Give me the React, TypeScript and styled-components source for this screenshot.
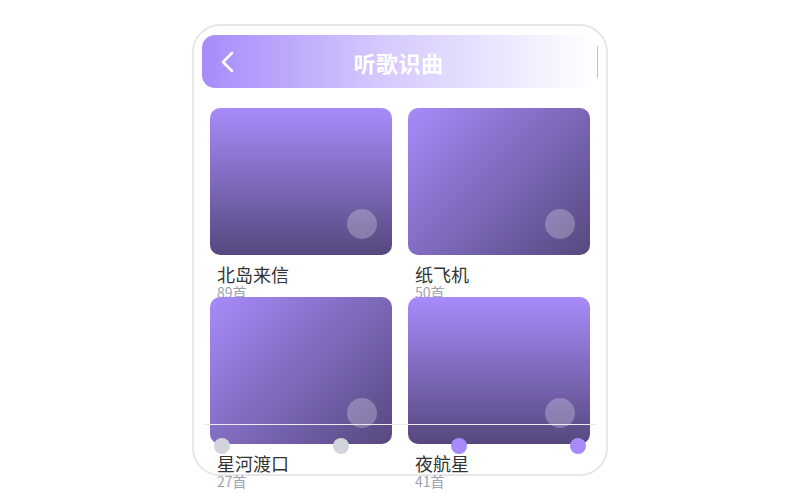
import styled, { createGlobalStyle } from "styled-components";

const GlobalStyle = createGlobalStyle`
  html, body {
    margin: 0;
    padding: 0;
    background: #ffffff;
    font-family: "Noto Sans CJK SC", "Noto Sans", sans-serif;
  }
`;

const Page = styled.div`
  display: flex;
  justify-content: center;
  padding: 24px 0 40px 0;
`;

const Phone = styled.div`
  position: relative;
  box-sizing: border-box;
  width: 416px;
  height: 452px;
  border: 2px solid #e5e7eb;
  border-radius: 28px;
  background: #ffffff;
`;

const Header = styled.header`
  display: flex;
  align-items: center;
  gap: 2px;
  padding: 9px 8px 0 8px;
`;

const Bar = styled.div`
  flex: 1;
  height: 53px;
  border-radius: 13px;
  background: linear-gradient(90deg, #a78bfa 0%, #d4c8fd 45%, #ffffff 100%);
  display: grid;
  grid-template-columns: 40px 1fr 40px;
  align-items: center;
`;

const Back = styled.button`
  background: none;
  border: none;
  padding: 0 0 0 18px;
  display: flex;
  align-items: center;
  cursor: pointer;
`;

const Title = styled.h1`
  margin: 0;
  text-align: center;
  color: #ffffff;
  font-size: 22px;
  font-weight: 700;
  letter-spacing: 0.5px;
`;

const Edge = styled.div`
  width: 1px;
  height: 32px;
  background: #c4b5fd;
`;

const Grid = styled.div`
  display: grid;
  grid-template-columns: repeat(2, 1fr);
  grid-auto-rows: 173px;
  column-gap: 16px;
  row-gap: 16px;
  padding: 20px 16px 0 16px;
`;

const Card = styled.div`
  display: flex;
  flex-direction: column;
`;

const Cover = styled.div<{ $angle: number }>`
  position: relative;
  flex-shrink: 0;
  height: 147px;
  border-radius: 10px;
  background: linear-gradient(${(p) => p.$angle}deg, #a78bfa 0%, #56487e 100%);
`;

const Play = styled.span`
  position: absolute;
  right: 15px;
  bottom: 16px;
  width: 30px;
  height: 30px;
  border-radius: 50%;
  background: rgba(255, 255, 255, 0.25);
`;

const Name = styled.div`
  flex-shrink: 0;
  margin-top: 9px;
  padding-left: 7px;
  font-size: 18px;
  line-height: 20px;
  color: #333333;
  white-space: nowrap;
`;

const Count = styled.div`
  flex-shrink: 0;
  padding-left: 7px;
  font-size: 14px;
  line-height: 16px;
  color: #9ca3af;
  white-space: nowrap;
`;

const Steps = styled.div`
  position: absolute;
  top: 398px;
  left: 9px;
  right: 9px;
`;

const Line = styled.div`
  height: 1px;
  background: #ececec;
`;

const Dots = styled.div`
  display: flex;
  justify-content: space-between;
  align-items: center;
  margin-top: 13px;
  padding: 0 11px;
`;

const Dot = styled.span<{ $on: boolean }>`
  width: 16px;
  height: 16px;
  border-radius: 50%;
  background: ${(p) => (p.$on ? "#a78bfa" : "#d1d5db")};
`;

const albums = [
  { name: "北岛来信", count: 89, angle: 180 },
  { name: "纸飞机", count: 50, angle: 135 },
  { name: "星河渡口", count: 27, angle: 135 },
  { name: "夜航星", count: 41, angle: 180 },
];

export default function App() {
  return (
    <>
      <GlobalStyle />
      <Page>
        <Phone>
          <Header>
            <Bar>
              <Back aria-label="返回">
                <svg width="14" height="22" viewBox="0 0 14 22">
                  <polyline
                    points="12,2 3,11 12,20"
                    fill="none"
                    stroke="#ffffff"
                    strokeWidth="2.6"
                    strokeLinecap="round"
                    strokeLinejoin="round"
                  />
                </svg>
              </Back>
              <Title>听歌识曲</Title>
              <span />
            </Bar>
            <Edge />
          </Header>
          <Grid>
            {albums.map((a) => (
              <Card key={a.name}>
                <Cover $angle={a.angle}>
                  <Play />
                </Cover>
                <Name>{a.name}</Name>
                <Count>{a.count}首</Count>
              </Card>
            ))}
          </Grid>
          <Steps>
            <Line />
            <Dots>
              <Dot $on={false} />
              <Dot $on={false} />
              <Dot $on={true} />
              <Dot $on={true} />
            </Dots>
          </Steps>
        </Phone>
      </Page>
    </>
  );
}
